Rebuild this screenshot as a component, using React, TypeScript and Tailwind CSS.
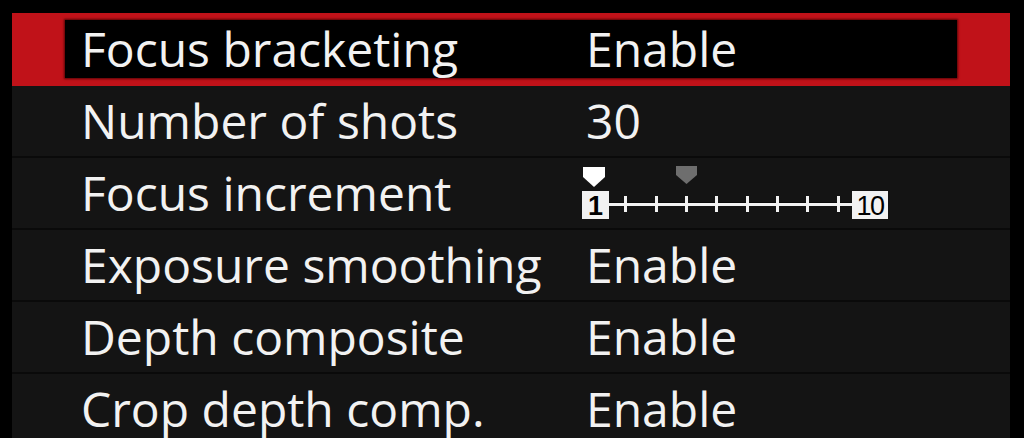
const rows = [
  { label: 'Number of shots', value: '30' },
  { label: 'Focus increment', value: null },
  { label: 'Exposure smoothing', value: 'Enable' },
  { label: 'Depth composite', value: 'Enable' },
  { label: 'Crop depth comp.', value: 'Enable' },
];

function IncrementScale() {
  const ticks = [625, 656, 686, 716, 747, 777, 807, 838].map((x) => x - 582);
  return (
    <svg width="310" height="56" viewBox="0 0 310 56" className="block">
      {/* current value marker */}
      <path d="M1 1 H23 V11 L12 21 L1 11 Z" fill="#ffffff" />
      {/* default marker */}
      <path d="M94 0 H115 V9 L104.5 18 L94 9 Z" fill="#6e6e6e" />
      <rect x="26" y="36" width="246" height="4" fill="#0a0a0a" />
      <rect x="26" y="37" width="246" height="3" fill="#f2f2f2" />
      {ticks.map((x) => (
        <rect key={x} x={x - 1} y="30" width="3" height="16" fill="#f2f2f2" />
      ))}
      <rect x="0" y="25" width="27" height="28" fill="#f2f2f2" />
      <text x="13.5" y="49" textAnchor="middle" fontFamily="'Liberation Sans', Arial, sans-serif" fontWeight="700" fontSize="27" fill="#000">1</text>
      <rect x="270" y="25" width="36" height="28" fill="#f2f2f2" />
      <text x="288" y="49" textAnchor="middle" fontFamily="'Liberation Sans', Arial, sans-serif" fontSize="27" letterSpacing="-1.5" fill="#000">10</text>
    </svg>
  );
}

export default function App() {
  return (
    <div className="w-[1024px] h-[438px] overflow-hidden bg-black pt-[13px] pl-[12px]" style={{ fontFamily: "'Open Sans', 'Noto Sans', sans-serif" }}>
      <div className="w-[998px] bg-[#141414] text-[#f2f2f2] text-[48px] leading-none">
        {/* selected row */}
        <div className="h-[73px] bg-[#c01219] px-[53px] pt-[7px] pb-[8px]">
          <div className="h-full bg-black flex items-center pl-[16px] shadow-[0_0_2px_1px_rgba(60,0,0,0.8)]">
            <span className="w-[505px]">Focus bracketing</span>
            <span>Enable</span>
          </div>
        </div>
        {rows.map((r) => (
          <div key={r.label} className="h-[72px] flex items-center pl-[69px] border-b-2 border-[#0a0a0a]">
            <span className="w-[505px]">{r.label}</span>
            {r.value ? (
              <span>{r.value}</span>
            ) : (
              <div className="-ml-[4px] mt-[2px]">
                <IncrementScale />
              </div>
            )}
          </div>
        ))}
      </div>
    </div>
  );
}
